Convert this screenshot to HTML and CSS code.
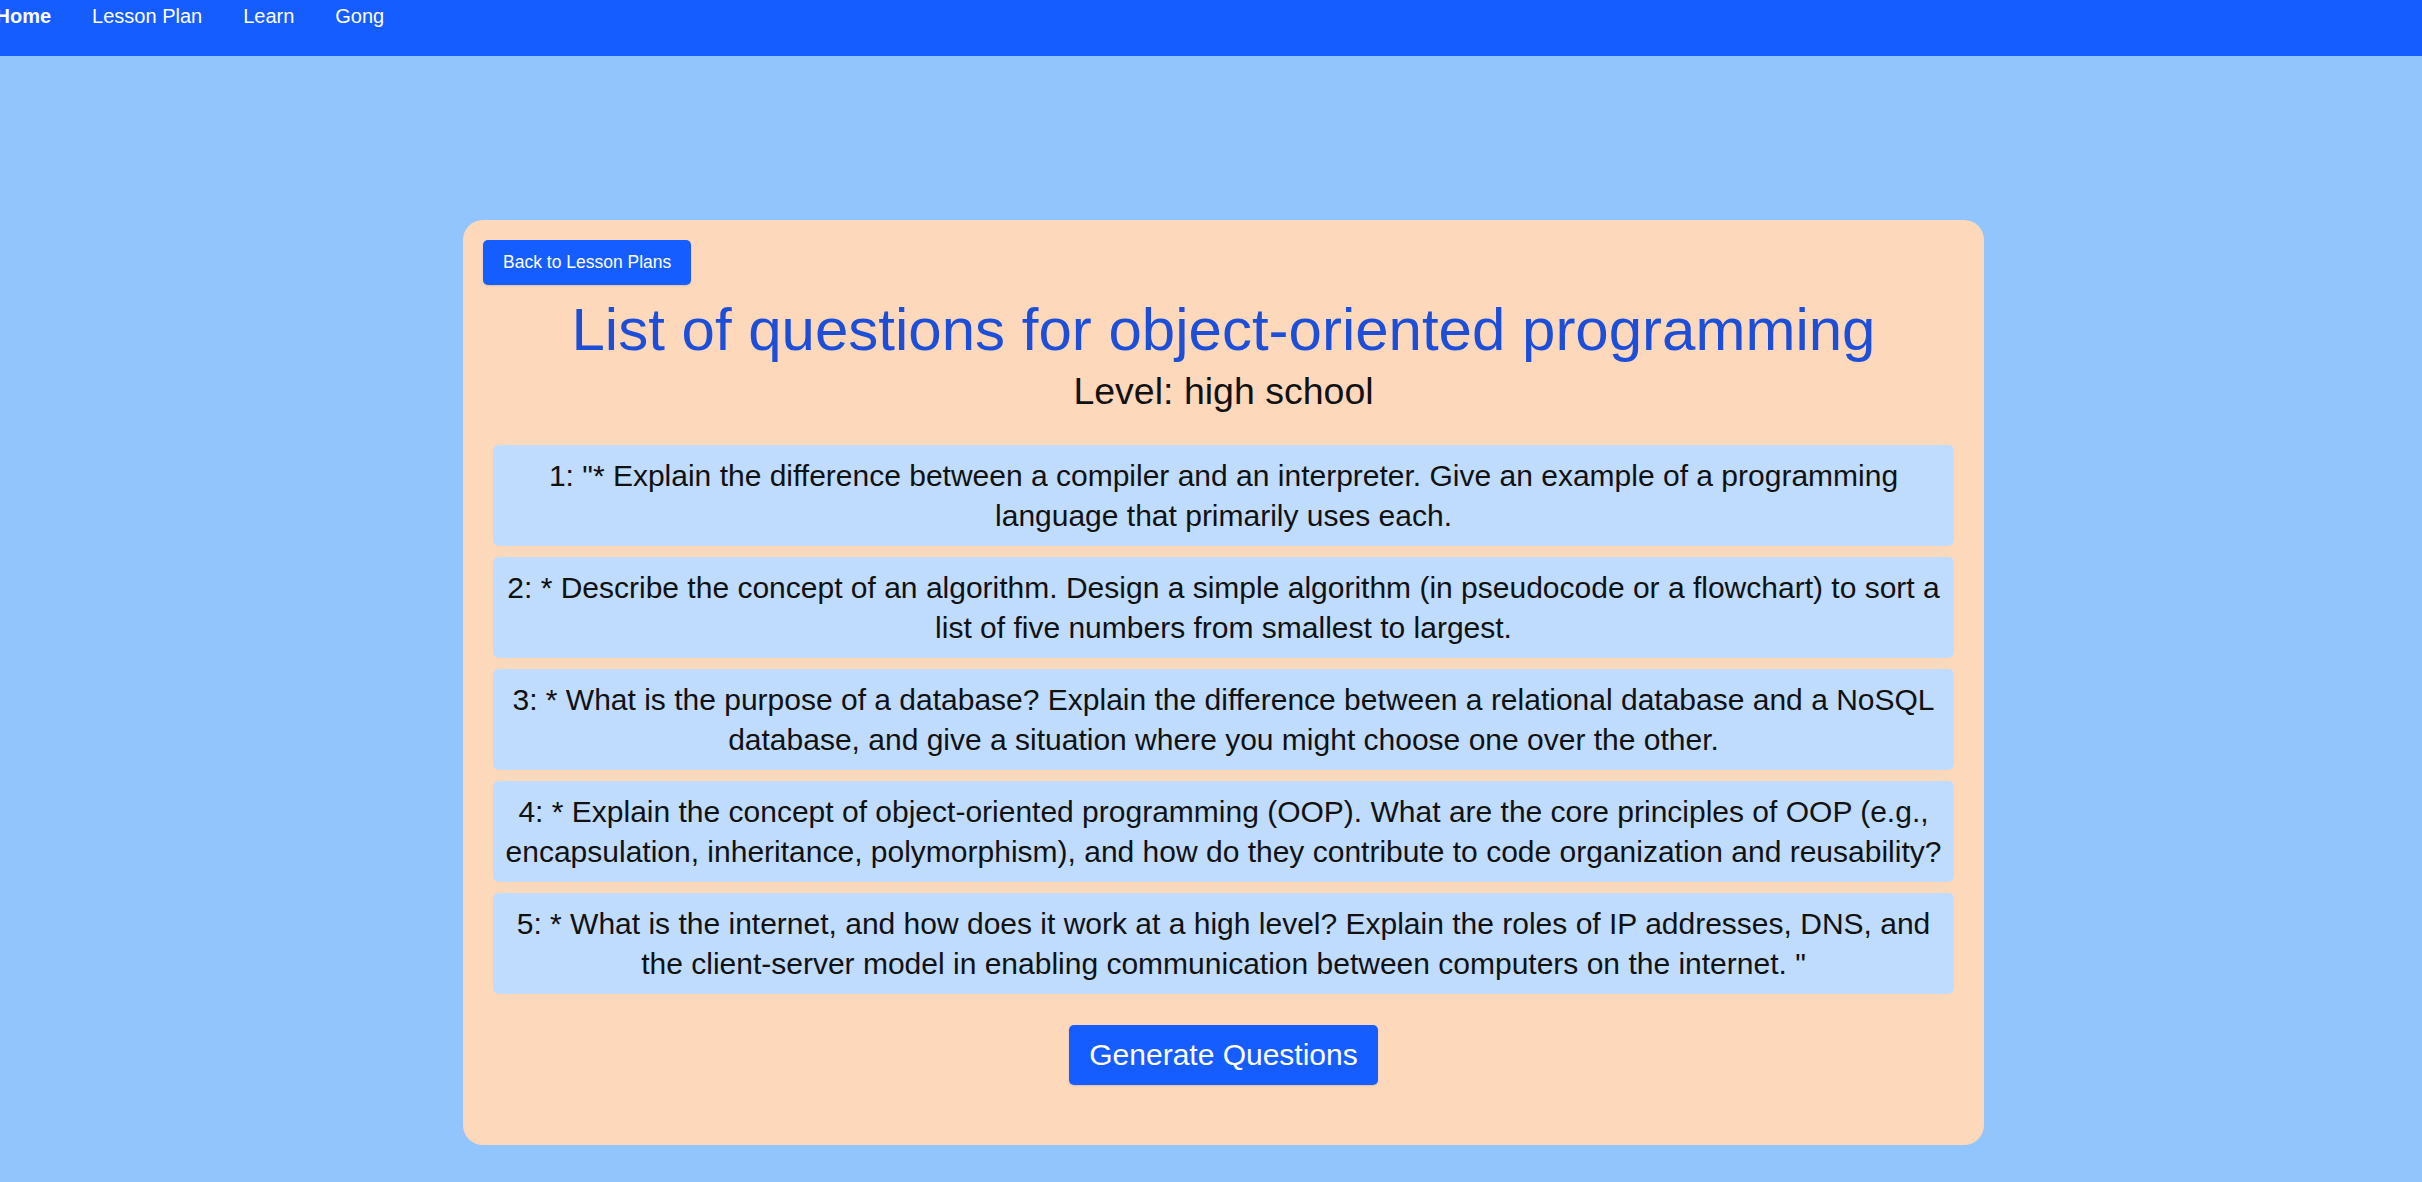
FILE: index.html
```html
<!DOCTYPE html>
<html lang="en">
<head>
<meta charset="utf-8">
<title>List of questions</title>
<link rel="stylesheet" href="styles.css">
</head>
<body>
<nav class="topnav">
  <a class="nav-link nav-home" href="#">Home</a>
  <a class="nav-link" href="#">Lesson Plan</a>
  <a class="nav-link" href="#">Learn</a>
  <a class="nav-link" href="#">Gong</a>
</nav>
<main class="page">
  <section class="card">
    <div class="card-top">
      <button class="btn btn-back" type="button">Back to Lesson Plans</button>
    </div>
    <h1 class="title">List of questions for object-oriented programming</h1>
    <h2 class="level">Level: high school</h2>
    <ul class="questions">
      <li class="question">1: "* Explain the difference between a compiler and an interpreter. Give an example of a programming language that primarily uses each.</li>
      <li class="question">2: * Describe the concept of an algorithm. Design a simple algorithm (in pseudocode or a flowchart) to sort a list of five numbers from smallest to largest.</li>
      <li class="question">3: * What is the purpose of a database? Explain the difference between a relational database and a NoSQL database, and give a situation where you might choose one over the other.</li>
      <li class="question">4: * Explain the concept of object-oriented programming (OOP). What are the core principles of OOP (e.g., encapsulation, inheritance, polymorphism), and how do they contribute to code organization and reusability?</li>
      <li class="question">5: * What is the internet, and how does it work at a high level? Explain the roles of IP addresses, DNS, and the client-server model in enabling communication between computers on the internet. "</li>
    </ul>
    <div class="actions">
      <button class="btn btn-generate" type="button">Generate Questions</button>
    </div>
  </section>
</main>
</body>
</html>
```
FILE: styles.css
```css
html, body {
  margin: 0;
  padding: 0;
}

body {
  background: #93c5fd;
  font-family: "Liberation Sans", Arial, sans-serif;
  color: #111;
  min-height: 1182px;
}

.topnav {
  height: 56px;
  background: #165dff;
  display: flex;
  align-items: flex-start;
  gap: 41px;
  padding-top: 5px;
  box-sizing: border-box;
}

.nav-link {
  color: #fff;
  text-decoration: none;
  font-size: 20px;
  line-height: 23px;
}

.nav-home {
  font-weight: bold;
  margin-left: -4.5px;
}

.page {
  padding-top: 164px;
}

.card {
  margin-left: 463px;
  width: 1521px;
  box-sizing: border-box;
  background: #fdd8bb;
  border-radius: 20px;
  padding: 20px 20px 20px;
  display: flex;
  flex-direction: column;
}

.card-top {
  display: flex;
}

.btn {
  font-family: "Liberation Sans", Arial, sans-serif;
  background: #165dff;
  color: #fff;
  border: none;
  cursor: pointer;
  box-shadow: 0 1px 2px rgba(0, 0, 0, 0.12);
}

.btn-back {
  font-size: 17.5px;
  line-height: 25px;
  padding: 10px 20px;
  border-radius: 5px;
}

.title {
  margin: 10px 0 0;
  font-size: 60px;
  line-height: 69px;
  font-weight: normal;
  color: #1d4ed8;
  text-align: center;
}

.level {
  margin: 7px 0 0;
  font-size: 37.5px;
  line-height: 41px;
  font-weight: normal;
  color: #111;
  text-align: center;
}

.questions {
  list-style: none;
  margin: 33px 10px 0;
  padding: 0;
  display: flex;
  flex-direction: column;
  gap: 11px;
}

.question {
  background: #bfdbfe;
  border-radius: 6px;
  padding: 10.5px 10px;
  font-size: 30px;
  line-height: 40px;
  text-align: center;
  color: #111;
}

.actions {
  display: flex;
  justify-content: center;
  margin: 31px 0 40px;
}

.btn-generate {
  font-size: 30px;
  line-height: 36px;
  padding: 12px 20px;
  border-radius: 5px;
}
```
